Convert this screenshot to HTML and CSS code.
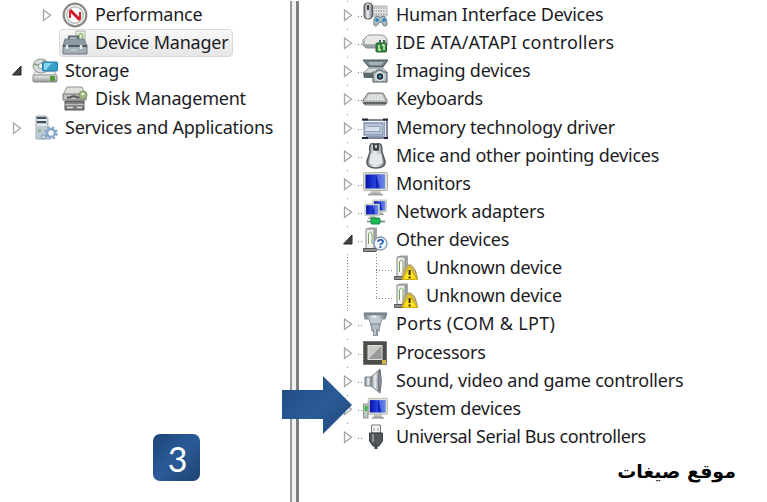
FILE: index.html
```html
<!DOCTYPE html>
<html lang="en">
<head>
    <meta charset="UTF-8">
    <meta name="viewport" content="width=device-width, initial-scale=1.0">
    <title>Computer Management</title>
    <link rel="stylesheet" href="styles.css">
</head>
<body>
    <!-- Shared shapes -->
    <svg class="defs" width="0" height="0">
        <defs>
            <linearGradient id="metal" x1="0" y1="0" x2="0" y2="1"><stop offset="0" stop-color="#f4f5f5"/><stop offset="1" stop-color="#8d9498"/></linearGradient>
            <linearGradient id="metalH"><stop offset="0" stop-color="#777e86"/><stop offset=".45" stop-color="#eef1f3"/><stop offset="1" stop-color="#68717a"/></linearGradient>
            <linearGradient id="screen"><stop offset="0" stop-color="#0712a8"/><stop offset=".5" stop-color="#2744dc"/><stop offset=".55" stop-color="#071bba"/><stop offset="1" stop-color="#5876e9"/></linearGradient>
            <linearGradient id="blue" x1="0" y1="0" x2="1" y2="1"><stop offset="0" stop-color="#204a80"/><stop offset=".55" stop-color="#2a5b98"/><stop offset="1" stop-color="#204675"/></linearGradient>
            <symbol id="closed" viewBox="0 0 10 14"><path d="M1.500 2L8.500 7.200L1.500 12.400Z" fill="#fff" stroke="#a5a5a5" stroke-width="1.300"/></symbol>
            <symbol id="open" viewBox="0 0 10 14"><path d="M9 2V11H.5Z" fill="#444" stroke="#222"/></symbol>
            <symbol id="monitor" viewBox="0 0 26 26" preserveAspectRatio="none">
                <path d="M9 18H18L19 23H8Z" fill="#c5c8c4"/><path d="M6 23Q13 20 21 23V24.500H6Z" fill="#a3a6a0"/>
                <rect x="1.500" y="1.500" width="24" height="18" rx="1" fill="#dcddd3" stroke="#b4b6ac"/>
                <rect x="3.500" y="3.500" width="19.500" height="14" fill="url(#screen)"/><path d="M14 3.500H23V17H18Z" fill="#819bf0" opacity=".5"/>
            </symbol>
            <symbol id="tower" viewBox="0 0 26 26">
                <path d="M4 2L7 .5H15V21L12 24H4Z" fill="#a2a6a5"/><path d="M4 2H12V24H4Z" fill="#eff0ed" stroke="#888"/>
                <path d="M6.500 17V7Q8.500 3 10 7V17" fill="#fff" stroke="#73a052"/><path d="M1.500 21.500H16L14 24.500H1.500Z" fill="#8c9296" stroke="#555"/>
            </symbol>
            <symbol id="unknown" viewBox="0 0 26 26">
                <use href="#tower"/><path d="M9 24.500Q10 12 16.500 9.500Q23 12 24.500 24.500Z" fill="#c9b56a" stroke="#a8914a"/>
                <path d="M16.500 11.500L24 24.500H9.500Z" fill="#ffe51d" stroke="#d1ab00"/><path d="M16.600 15V20M16.600 21.500V23.500" stroke="#332500" stroke-width="2"/>
            </symbol>
        </defs>
    </svg>

    <main class="console">
        <ul class="nav">
            <li class="item sub">
                <svg class="arrow"><use href="#closed"/></svg>
                <svg class="icon" viewBox="0 0 26 26"><circle cx="13" cy="13" r="11.300" fill="#fff" stroke="#8c8985" stroke-width="2.200"/><circle cx="13" cy="13" r="8.300" fill="#fff" stroke="#b5c0b5" stroke-width="1.500"/><path d="M8 16V9M18 17V10" fill="none" stroke="#e0202d" stroke-width="2"/><path d="M8 8L18 18" stroke="#d01a28" stroke-width="3"/></svg>
                <span class="label">Performance</span>
            </li>
            <li class="item sub selected">
                <svg class="icon" viewBox="0 0 26 26"><path d="M14 1H23V18H14Z" fill="#e9eee2" stroke="#aab29f"/><path d="M17 10V5Q19 2 20.500 5V10" fill="none" stroke="#8ebc6c" stroke-width="1.500"/><path d="M7 10V6.500H16V10" fill="none" stroke="#606b73" stroke-width="2"/><path d="M3 9H22L25 16H1Z" fill="#8d9ba5" stroke="#73818b"/><path d="M1 15.500H25V24H1Z" fill="#a2afb6" stroke="#687580"/><path d="M1 16H25" stroke="#4c5961" stroke-width="2"/><path d="M5 15V19M19 15V19" stroke="#e8eef0" stroke-width="2.500"/><path d="M9 20H15" stroke="#e1e6e7"/></svg>
                <span class="label">Device Manager</span>
            </li>
            <li class="item">
                <svg class="arrow"><use href="#open"/></svg>
                <svg class="icon" viewBox="0 0 26 26"><path d="M4 13H22L25 18H1Z" fill="#eee" stroke="#aaa"/><ellipse cx="9" cy="8" rx="8" ry="7" fill="#d7dcda" stroke="#8b9591"/><path d="M2 6L9 8L13 2" fill="none" stroke="#81a77b" stroke-width="1.500"/><circle cx="9" cy="8" r="2.500" fill="#fff" stroke="#999"/><rect x="10.500" y="4" width="15" height="9" rx="1" fill="#38a0cc" stroke="#247da7"/><path d="M12 5H20L14 12H12Z" fill="#82d4ef"/><rect x="1" y="17" width="24" height="7" rx="1" fill="url(#metal)" stroke="#888"/><rect x="18" y="18" width="5" height="5" fill="#519c34"/></svg>
                <span class="label">Storage</span>
            </li>
            <li class="item sub">
                <span class="arrow"></span>
                <svg class="icon" viewBox="0 0 26 26"><path d="M5 1H20L24 9H1Z" fill="#dedfda" stroke="#93938f"/><path d="M1 8H24V14H1Z" fill="#bfc0bb" stroke="#777"/><path d="M5 11.500H8Q12 9 15 11.500H18" fill="none" stroke="#555" stroke-width="1.800"/><circle cx="21" cy="9" r="4" fill="#9fbc88" stroke="#7a9765"/><circle cx="21" cy="8" r="1.300" fill="#eaf4df"/><path d="M3 15H22V24H3Z" fill="#797b79" stroke="#555"/><path d="M3 18.500H22" stroke="#bbb" stroke-width="1.500"/><path d="M5 21.500H11M15 21.500H20" stroke="#deddd6" stroke-width="1.500"/></svg>
                <span class="label">Disk Management</span>
            </li>
            <li class="item">
                <svg class="arrow"><use href="#closed"/></svg>
                <svg class="icon" viewBox="0 0 26 26"><path d="M4 1H14L16 3V24H4Z" fill="#bdcad1" stroke="#a5b0b6"/><path d="M5 3H14M5 7H14" stroke="#43515b" stroke-width="1.800"/><path d="M5 5H15M5 10H15" stroke="#eff5f6" stroke-width="1.500"/><path d="M6 14H9V17H6Z" fill="#84bb8a"/><circle cx="19" cy="18" r="5.500" fill="none" stroke="#8faccc" stroke-width="2.500" stroke-dasharray="2.600 1.720"/><circle cx="19" cy="18" r="3.800" fill="#f1f5f8" stroke="#86a4c8" stroke-width="2.200"/><circle cx="11.500" cy="22" r="2" fill="#dce6ed" stroke="#8faccc" stroke-width="1.500"/></svg>
                <span class="label">Services and Applications</span>
            </li>
        </ul>

        <div class="splitter"></div>

        <ul class="devices">
            <li class="item"><svg class="arrow"><use href="#closed"/></svg><svg class="icon" viewBox="0 0 26 26"><path d="M10 4H25V14H10Z" fill="#e6e7e5" stroke="#aaa"/><path d="M11 6H24M11 9H24M11 12H24" stroke="#777e80" stroke-dasharray="1.500 1"/><rect x="2" y="1" width="8.500" height="16" rx="3.500" fill="url(#metalH)" stroke="#555"/><path d="M6 3V8" stroke="#444" stroke-width="2"/><path d="M12 23Q11 15 15 14Q18 17 21 14Q25 15 25 23Q21 26 20 20H17Q15 26 12 23Z" fill="#a7bdc9" stroke="#657782"/><circle cx="15" cy="18" r="1.700" fill="#267fba"/><circle cx="22" cy="18" r="1.700" fill="#267fba"/></svg><span class="label">Human Interface Devices</span></li>
            <li class="item"><svg class="arrow"><use href="#closed"/></svg><svg class="icon" viewBox="0 0 26 26"><path d="M4 7Q5 5 8 5H20Q24 6 25 9V16L22 18H4L1 15V10Z" fill="url(#metal)" stroke="#8d9395"/><path d="M3 10Q6 7 13 7H23V14H3Z" fill="#e8e9e7"/><rect x="14" y="13" width="10.500" height="9" rx="1" fill="#2f8740" stroke="#246331"/><path d="M17 15V20H19M20 15H22V20" fill="none" stroke="#e2f2c0" stroke-width="1.400"/><path d="M18 10V13M22 10V13" stroke="#426951" stroke-width="2"/></svg><span class="label wide">IDE ATA/ATAPI controllers</span></li>
            <li class="item"><svg class="arrow"><use href="#closed"/></svg><svg class="icon" viewBox="0 0 26 26"><path d="M1 2H26L21 9H7Z" fill="#738189" stroke="#495359"/><path d="M6 4H22L19 7H8Z" fill="#a5b3b7"/><path d="M7 10H21L25 15H1Z" fill="#d5d9d9" stroke="#8e9697"/><path d="M1 15H12V20H2Z" fill="#5e696d"/><path d="M11 14H14L15 12H20L21 14H25V24H11Z" fill="#b4c0c4" stroke="#4c575b"/><circle cx="18" cy="18.500" r="4" fill="#202d38" stroke="#e4eaec" stroke-width="1.500"/><circle cx="18" cy="18.500" r="1.500" fill="#4a89b4"/></svg><span class="label">Imaging devices</span></li>
            <li class="item"><svg class="arrow"><use href="#closed"/></svg><svg class="icon" viewBox="0 0 26 26"><path d="M6 7H21L25 14V17L23 19H3L1 17V14Z" fill="#b4b6b7" stroke="#777b7d"/><path d="M7 8.500H20L23 14.500H3Z" fill="#f1f2f1"/><path d="M7 10H21M5 12H22M4 14H23" stroke="#b4b7b8" stroke-dasharray="2 1"/><path d="M2 17H24" stroke="#60656a" stroke-width="2"/></svg><span class="label">Keyboards</span></li>
            <li class="item"><svg class="arrow"><use href="#closed"/></svg><svg class="icon" viewBox="0 0 26 26"><path d="M1 5H25V23H1" fill="#edf2f8" stroke="#5b6372" stroke-width="1.500"/><path d="M2 8H21V20H2Z" fill="#b9c6d7" stroke="#8297b4" stroke-width="1.300"/><path d="M6 11.500H18V16.500H2" fill="#d9e2ec" stroke="#8ca0b8"/><path d="M22.500 7V21.500H4" fill="none" stroke="#8c9db5"/><path d="M0 4.500H6M21 4.500H26M0 23H6M22 23H26" stroke="#202735" stroke-width="2"/></svg><span class="label">Memory technology driver</span></li>
            <li class="item"><svg class="arrow"><use href="#closed"/></svg><svg class="icon" viewBox="0 0 26 26"><path d="M9 1Q13-1 18 1Q20 2 20 9L23 18Q24 25 14 25Q4 25 5 18L8 9Q7 3 9 1Z" fill="url(#metalH)" stroke="#55595d" stroke-width="1.400"/><path d="M9 10Q13 13 19 10L21 20Q14 25 7 20Z" fill="#e4e8eb"/><path d="M11 1H17V7Q14 9 11 7Z" fill="#3e4448"/><path d="M14 2V5" stroke="#eee" stroke-width="1.600"/></svg><span class="label">Mice and other pointing devices</span></li>
            <li class="item"><svg class="arrow"><use href="#closed"/></svg><svg class="icon"><use href="#monitor"/></svg><span class="label">Monitors</span></li>
            <li class="item"><svg class="arrow"><use href="#closed"/></svg><svg class="icon" viewBox="0 0 26 26"><use href="#monitor" x="10" y="0" width="15" height="17"/><use href="#monitor" x="2" y="4" width="16" height="17"/><path d="M5 22.500H23" stroke="#849b9c" stroke-width="2"/><rect x="9" y="19" width="9" height="6" rx="1" fill="#1db756" stroke="#188941"/></svg><span class="label">Network adapters</span></li>
            <li class="item"><svg class="arrow"><use href="#open"/></svg><svg class="icon" viewBox="0 0 26 26"><use href="#tower" width="26" height="26"/><circle cx="18.500" cy="16.500" r="6.500" fill="#eff6fc" stroke="#7f9ab4" stroke-width="1.300"/><text x="18.500" y="21" text-anchor="middle" class="question">?</text></svg><span class="label">Other devices</span></li>
            <li class="branch">
                <ul class="children">
                    <li class="item"><svg class="icon"><use href="#unknown"/></svg><span class="label">Unknown device</span></li>
                    <li class="item"><svg class="icon"><use href="#unknown"/></svg><span class="label">Unknown device</span></li>
                </ul>
            </li>
            <li class="item"><svg class="arrow"><use href="#closed"/></svg><svg class="icon" viewBox="0 0 26 26"><path d="M2 2H25L23 8H20L18 14H9L7 8H3Z" fill="url(#metalH)" stroke="#848a90"/><path d="M2 3H25" stroke="#7b848b" stroke-width="2.500"/><path d="M7 7H20L18 13H9Z" fill="#c2cbd1"/><path d="M9 13H18L17 20H10Z" fill="#b4bcc3" stroke="#7b858c"/><path d="M13.500 18V25" stroke="#8b959d" stroke-width="5"/><path d="M13 18V24" stroke="#d4dadf" stroke-width="1.500"/></svg><span class="label wider">Ports (COM &amp; LPT)</span></li>
            <li class="item"><svg class="arrow"><use href="#closed"/></svg><svg class="icon" viewBox="0 0 26 26"><rect x="1.500" y="1.500" width="23" height="23" fill="#4c4d48" stroke="#62635c" stroke-width="1" stroke-dasharray="2 1"/><rect x="6" y="5.500" width="14" height="14" fill="#c8c9c6" stroke="#e1e1da"/><path d="M6.500 19L19.500 6V19Z" fill="#999b9b"/><path d="M20 20H24V24H20Z" fill="#d6b842"/></svg><span class="label">Processors</span></li>
            <li class="item"><svg class="arrow"><use href="#closed"/></svg><svg class="icon" viewBox="0 0 26 26"><path d="M3 9H10V18H3Z" fill="url(#metalH)" stroke="#778087"/><path d="M9 9L18 1V25L9 18Z" fill="url(#metalH)" stroke="#7b848c"/><path d="M17.500 1Q21 13 17.500 25Q15 13 17.500 1" fill="#8b949c" stroke="#656f78"/></svg><span class="label">Sound, video and game controllers</span></li>
            <li class="item"><svg class="arrow"><use href="#closed"/></svg><svg class="icon" viewBox="0 0 26 26"><use href="#monitor" x="5" y="1" width="21" height="23"/><rect x="1.500" y="8" width="4.500" height="14" fill="#bec8bd" stroke="#8c988b"/><path d="M4 10V15" stroke="#35b548" stroke-width="2.500"/></svg><span class="label">System devices</span></li>
            <li class="item"><svg class="arrow"><use href="#closed"/></svg><svg class="icon" viewBox="0 0 26 26"><path d="M9.500 1H18.500V9H9.500Z" fill="#f1f1f1" stroke="#777"/><path d="M12 4V7M16 4V7" stroke="#999"/><path d="M7.500 9H20.500V17L17 22H11L7.500 17Z" fill="#51565b" stroke="#373c40"/><path d="M11 10V18" stroke="#a0a5a8" stroke-width="1.500"/><path d="M14 21V25" stroke="#3d4246" stroke-width="3"/></svg><span class="label tight">Universal Serial Bus controllers</span></li>
        </ul>
    </main>

    <!-- Callouts over the console -->
    <svg class="pointer" viewBox="0 0 70 58"><path d="M0 14H41V0L70 29L41 58V43H0Z" fill="url(#blue)"/></svg>
    <div class="step">3</div>
    <div class="credit" lang="ar" dir="rtl">موقع صيغات</div>
</body>
</html>
```
FILE: styles.css
```css
body {
    position: relative;
    width: 767px;
    height: 502px;
    margin: 0;
    overflow: hidden;
    background: #fff;
    color: #1c1c24;
    font-family: "Noto Sans", "Open Sans", sans-serif;
    font-size: 18px;
}
ul {
    margin: 0;
    padding: 0;
    list-style: none;
}
.defs {
    position: absolute;
}
.console {
    display: flex;
    height: 501px;
    padding-top: 1px;
}
.nav {
    width: 290px;
}
.item {
    display: flex;
    align-items: center;
    height: 28.13px;
}
.arrow {
    flex: none;
    width: 10px;
    height: 14px;
}
.icon {
    flex: none;
    width: 26px;
    height: 26px;
}
.label {
    margin-left: 8px;
    padding-bottom: 2px;
    line-height: 26px;
    white-space: nowrap;
    letter-spacing: -0.22px;
}
.label.wide {
    letter-spacing: 0.18px;
}
.label.wider {
    letter-spacing: 0.3px;
}
.label.tight {
    letter-spacing: -0.38px;
}
.nav .item {
    padding-left: 12px;
}
.nav .icon {
    margin-left: 10px;
}
.nav .label {
    margin-left: 7px;
}
.nav .item.sub {
    padding-left: 42px;
}
.nav .item.selected {
    box-sizing: border-box;
    width: 174px;
    margin-left: 59px;
    padding-left: 2px;
    border: 1px solid #d9d9d9;
    border-radius: 4px;
    background: linear-gradient(#f8f8f8, #e6e6e6);
}
.nav .selected .icon {
    margin-left: 0;
}
.splitter {
    box-sizing: border-box;
    width: 9px;
    border-left: 2px solid #999;
    border-right: 3px solid #7e7e7e;
    background: #f1f1f1;
}

/* Device tree */
.devices {
    padding-left: 44px;
}
.devices > .item {
    background:
        linear-gradient(#888, #888) 4px 0 / 1px 1px no-repeat,
        repeating-linear-gradient(90deg, #777 0 1px, transparent 1px 3px) 15px 15px / 5px 1px no-repeat;
}
.devices > .item .icon {
    margin-left: 9px;
}
.branch {
    margin-left: 4px;
    background: repeating-linear-gradient(#888 0 1px, transparent 1px 3px) 0 0 / 1px 100% no-repeat;
}
.children {
    padding-left: 29px;
    background: repeating-linear-gradient(#888 0 1px, transparent 1px 3px) 29px 0 / 1px 45px no-repeat;
}
.children .item {
    padding-left: 17px;
    background: repeating-linear-gradient(90deg, #888 0 1px, transparent 1px 3px) 0 16px / 17px 1px no-repeat;
}
.children .label {
    margin-left: 7px;
}
.question {
    fill: #2851b5;
    font: bold 13px "Liberation Sans", sans-serif;
}

/* Callouts */
.pointer {
    position: absolute;
    top: 376px;
    left: 282px;
    width: 70px;
    height: 58px;
}
.step {
    position: absolute;
    top: 434px;
    left: 153px;
    width: 47px;
    height: 47px;
    border-radius: 7px;
    background: linear-gradient(135deg, #1e4577, #2a5b98 50%, #1e4370);
    color: #fff;
    font: 34px/50px Lato, sans-serif;
    text-align: center;
    text-indent: 2px;
}
.credit {
    position: absolute;
    right: 31px;
    bottom: 15px;
    color: #000;
    font: bold 19px/32px "DejaVu Sans", sans-serif;
    white-space: nowrap;
}
```
